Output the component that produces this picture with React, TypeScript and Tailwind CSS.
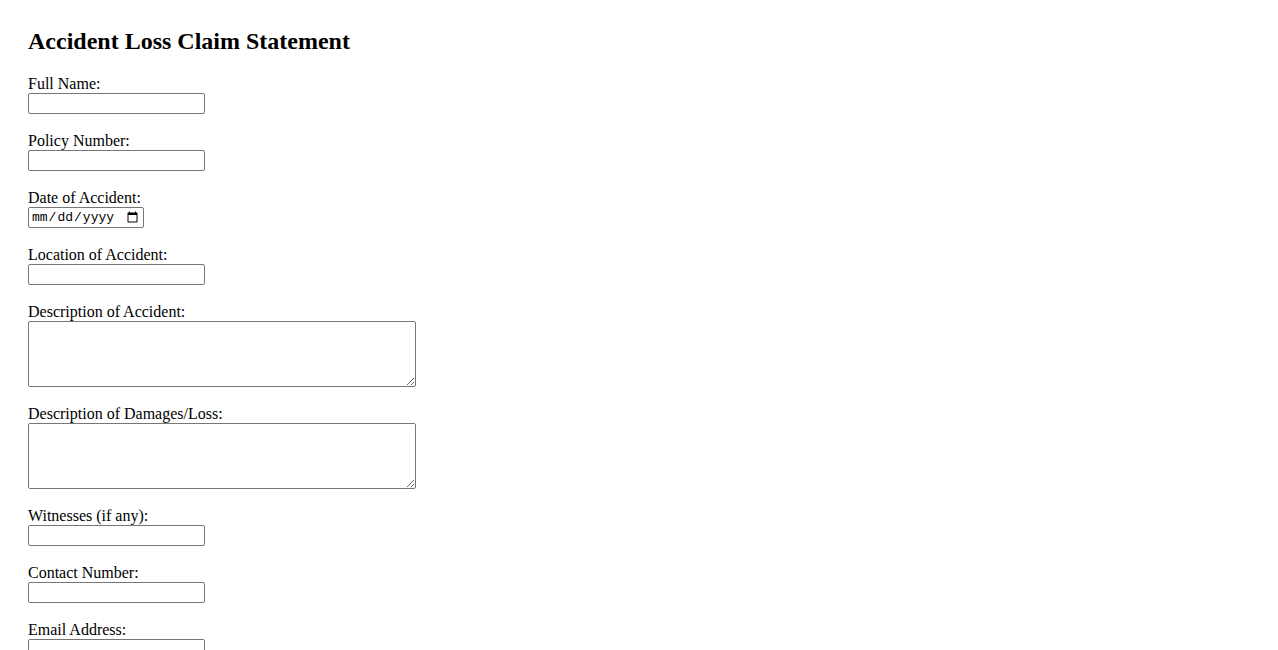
import React from "react";

const fields = [
  { label: "Full Name:", kind: "text" },
  { label: "Policy Number:", kind: "text" },
  { label: "Date of Accident:", kind: "date" },
  { label: "Location of Accident:", kind: "text" },
  { label: "Description of Accident:", kind: "area" },
  { label: "Description of Damages/Loss:", kind: "area" },
  { label: "Witnesses (if any):", kind: "text" },
  { label: "Contact Number:", kind: "tel" },
  { label: "Email Address:", kind: "email" },
];

const App = () => {
  return (
    <div className="min-h-screen bg-white px-[28px] pt-[27px] font-['Liberation_Serif',serif] text-black">
      <h2 className="mb-[20px] text-[24px] font-bold leading-[28px]">
        Accident Loss Claim Statement
      </h2>
      <form className="flex flex-col">
        {fields.map(({ label, kind }, key) => (
          <div key={key} className="mb-[18px] flex flex-col items-start">
            <label className="text-[16px] leading-[18px]">{label}</label>
            {kind === "area" ? (
              <textarea className="h-[66px] w-[388px] rounded-[2px] border border-[#767676] bg-white" />
            ) : kind === "date" ? (
              <input
                type="date"
                className="h-[21px] w-[116px] rounded-[2px] border border-[#767676] bg-white px-[2px] font-['Liberation_Mono',monospace] text-[13px] text-black"
              />
            ) : (
              <input
                type={kind}
                className="h-[21px] w-[177px] rounded-[2px] border border-[#767676] bg-white px-[2px] text-[13px]"
              />
            )}
          </div>
        ))}
      </form>
    </div>
  );
};

export default App;
